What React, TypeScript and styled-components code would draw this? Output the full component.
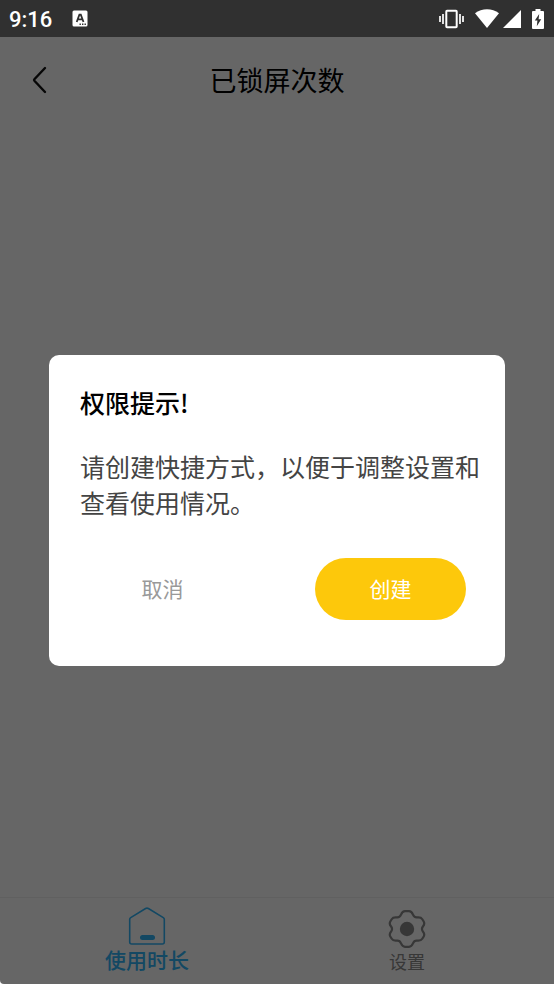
import React from "react";
import styled, { createGlobalStyle } from "styled-components";

const GlobalStyle = createGlobalStyle`
  *, *::before, *::after { box-sizing: border-box; }
  body {
    margin: 0;
    background: #fff;
    font-family: "Noto Sans CJK SC", sans-serif;
  }
  h1, h2, p { margin: 0; }
  button { font-family: inherit; border: 0; padding: 0; background: none; cursor: pointer; }
  svg { display: block; flex: none; }
`;

const Phone = styled.div`
  display: flex;
  flex-direction: column;
  min-height: 100vh;
  overflow: hidden;
  border-bottom-left-radius: 4px;
`;

const StatusBar = styled.header`
  display: flex;
  align-items: center;
  justify-content: space-between;
  height: 37px;
  padding: 0 10px 0 9px;
  background: #303030;
  color: #fff;
`;

const StatusGroup = styled.div<{ $gap: number }>`
  display: flex;
  align-items: center;
  gap: ${(p) => p.$gap}px;
`;

const Clock = styled.time`
  padding-top: 2px;
  font: 500 22px/26px Roboto, sans-serif;
`;

const Screen = styled.div`
  position: relative;
  flex: 1;
  display: flex;
  flex-direction: column;
  background: #fff;
`;

const TitleBar = styled.div`
  display: grid;
  grid-template-columns: 48px 1fr 48px;
  align-items: center;
  height: 86px;
  padding: 0 15px;
`;

const BackButton = styled.button`
  display: grid;
  place-items: center;
  height: 48px;
  color: #111;
`;

const PageTitle = styled.h1`
  font-size: 27px;
  line-height: 40px;
  font-weight: 400;
  text-align: center;
  color: #000;
`;

const Content = styled.main`
  flex: 1;
`;

const TabBar = styled.nav`
  display: grid;
  grid-template-columns: 1fr 1fr;
  height: 87px;
  padding: 0 17px;
  border-top: 1px solid #efefef;
`;

const Tab = styled.button<{ $active?: boolean }>`
  display: flex;
  flex-direction: column;
  align-items: center;
  justify-content: flex-end;
  padding-bottom: 10px;
  font-size: ${(p) => (p.$active ? 21 : 18)}px;
  line-height: ${(p) => (p.$active ? 29 : 26)}px;
  font-weight: ${(p) => (p.$active ? 500 : 400)};
  color: ${(p) => (p.$active ? "#30b4f8" : "#8a8a8a")};
`;

const Overlay = styled.div`
  position: absolute;
  inset: 0;
  display: grid;
  grid-template-columns: 1fr;
  align-items: center;
  padding: 0 49px;
  background: rgba(0, 0, 0, 0.6);
`;

const Dialog = styled.section`
  padding: 29px 24px 46px 31px;
  border-radius: 10px;
  background: #fff;
`;

const DialogTitle = styled.h2`
  font-size: 25px;
  line-height: 36px;
  font-weight: 500;
  color: #000;
`;

const DialogText = styled.p`
  margin-top: 28px;
  font-size: 25px;
  line-height: 36px;
  color: #444;
`;

const Actions = styled.div`
  display: flex;
  justify-content: space-between;
  margin: 38px 15px 0 7px;
`;

const ActionButton = styled.button<{ $primary?: boolean }>`
  width: 151px;
  height: 62px;
  padding-bottom: 2px;
  border-radius: 31px;
  font-size: 21px;
  line-height: 30px;
  color: ${(p) => (p.$primary ? "#fff" : "#999")};
  background: ${(p) => (p.$primary ? "#fdc80b" : "transparent")};
`;

const KeyboardIcon = () => (
  <svg width="16" height="17" viewBox="0 0 16 17" aria-hidden="true">
    <rect x="0.5" y="0.5" width="15" height="16" rx="1.5" fill="#fff" />
    <path d="M4.7 12 7.4 4.6h1.4L11.5 12M5.8 9.4h4.6" fill="none" stroke="#303030" strokeWidth="1.8" />
    <path d="M7.5 14.2h1.4M10 14.2h1.4M12.5 14.2h1.4" stroke="#303030" strokeWidth="1.4" />
  </svg>
);

const VibrateIcon = () => (
  <svg width="25" height="20" viewBox="0 0 25 20" aria-hidden="true">
    <path
      fill="none"
      stroke="#fff"
      strokeWidth="2"
      d="M8 1.8h9a.7.7 0 0 1 .7.7v15a.7.7 0 0 1-.7.7H8a.7.7 0 0 1-.7-.7v-15a.7.7 0 0 1 .7-.7Z"
    />
    <path d="M1 7v6M4 5v10M21 5v10M24 7v6" stroke="#fff" strokeWidth="1.7" />
  </svg>
);

const WifiIcon = () => (
  <svg width="24" height="19" viewBox="0 0 24 19" aria-hidden="true">
    <path d="M0 4.2C6.8-1.1 17.2-1.1 24 4.2L12 19Z" fill="#fff" />
  </svg>
);

const SignalIcon = () => (
  <svg width="18" height="18" viewBox="0 0 18 18" aria-hidden="true">
    <path d="M18 0v18H0Z" fill="#fff" />
  </svg>
);

const BatteryIcon = () => (
  <svg width="12" height="20" viewBox="0 0 12 20" aria-hidden="true">
    <path d="M3.5 0h5v2H11a1 1 0 0 1 1 1v16a1 1 0 0 1-1 1H1a1 1 0 0 1-1-1V3a1 1 0 0 1 1-1h2.5Z" fill="#fff" />
    <path d="M7.2 5 2.8 11.6h2.6L4.8 17.2 9.2 10.2H6.6Z" fill="#303030" />
  </svg>
);

const BackIcon = () => (
  <svg width="15" height="28" viewBox="0 0 15 28" fill="none" aria-hidden="true">
    <path
      d="M13 2 2.4 13.2a1.2 1.2 0 0 0 0 1.6L13 26"
      stroke="currentColor"
      strokeWidth="2.4"
      strokeLinecap="round"
    />
  </svg>
);

const HomeIcon = () => (
  <svg width="38" height="38" viewBox="0 0 38 38" fill="none" aria-hidden="true">
    <path
      d="M1.7 12.2q0-1 1-1.6L17.6 1.5q1.4-.8 2.8 0l14.9 9.1q1 .6 1 1.6V35a2 2 0 0 1-2 2H3.7a2 2 0 0 1-2-2Z"
      stroke="currentColor"
      strokeWidth="1.6"
    />
    <rect x="12" y="28" width="15" height="5" rx="2.5" fill="currentColor" />
  </svg>
);

const GearIcon = () => (
  <svg width="38" height="38" viewBox="0 0 38 38" fill="none" aria-hidden="true">
    <path
      d="M17 1.200H21C23.600 1.200 24.300 3 25 4.700C25.800 6.700 27 7.600 29 7.400C31.500 7.100 33 7 34.300 9.200L35.700 11.500C37 13.700 36.300 14.800 34.900 16.500C33.700 18.100 33.700 19.900 34.900 21.500C36.300 23.200 37 24.300 35.700 26.500L34.300 28.800C33 31 31.500 30.900 29 30.600C27 30.400 25.800 31.300 25 33.300C24.300 35 23.600 36.800 21 36.800H17C14.400 36.800 13.700 35 13 33.300C12.200 31.300 11 30.400 9 30.600C6.500 30.900 5 31 3.700 28.800L2.300 26.500C1 24.300 1.700 23.200 3.100 21.500C4.300 19.900 4.300 18.100 3.100 16.500C1.700 14.800 1 13.700 2.300 11.500L3.700 9.200C5 7 6.500 7.100 9 7.400C11 7.600 12.200 6.700 13 4.700C13.700 3 14.400 1.200 17 1.200Z"
      stroke="currentColor"
      strokeWidth="2.2"
    />
    <circle cx="19" cy="19" r="7.200" fill="currentColor" />
  </svg>
);

export default function App() {
  return (
    <>
      <GlobalStyle />
      <Phone>
        <StatusBar>
          <StatusGroup $gap={20}>
            <Clock>9:16</Clock>
            <KeyboardIcon />
          </StatusGroup>
          <StatusGroup $gap={11}>
            <VibrateIcon />
            <StatusGroup $gap={4}>
              <WifiIcon />
              <SignalIcon />
            </StatusGroup>
            <BatteryIcon />
          </StatusGroup>
        </StatusBar>
        <Screen>
          <TitleBar>
            <BackButton aria-label="返回">
              <BackIcon />
            </BackButton>
            <PageTitle>已锁屏次数</PageTitle>
          </TitleBar>
          <Content />
          <TabBar>
            <Tab $active aria-current="page">
              <HomeIcon />
              使用时长
            </Tab>
            <Tab>
              <GearIcon />
              设置
            </Tab>
          </TabBar>
          <Overlay>
            <Dialog role="dialog" aria-modal="true" aria-labelledby="dialog-title">
              <DialogTitle id="dialog-title">权限提示!</DialogTitle>
              <DialogText>请创建快捷方式，以便于调整设置和查看使用情况。</DialogText>
              <Actions>
                <ActionButton>取消</ActionButton>
                <ActionButton $primary>创建</ActionButton>
              </Actions>
            </Dialog>
          </Overlay>
        </Screen>
      </Phone>
    </>
  );
}
